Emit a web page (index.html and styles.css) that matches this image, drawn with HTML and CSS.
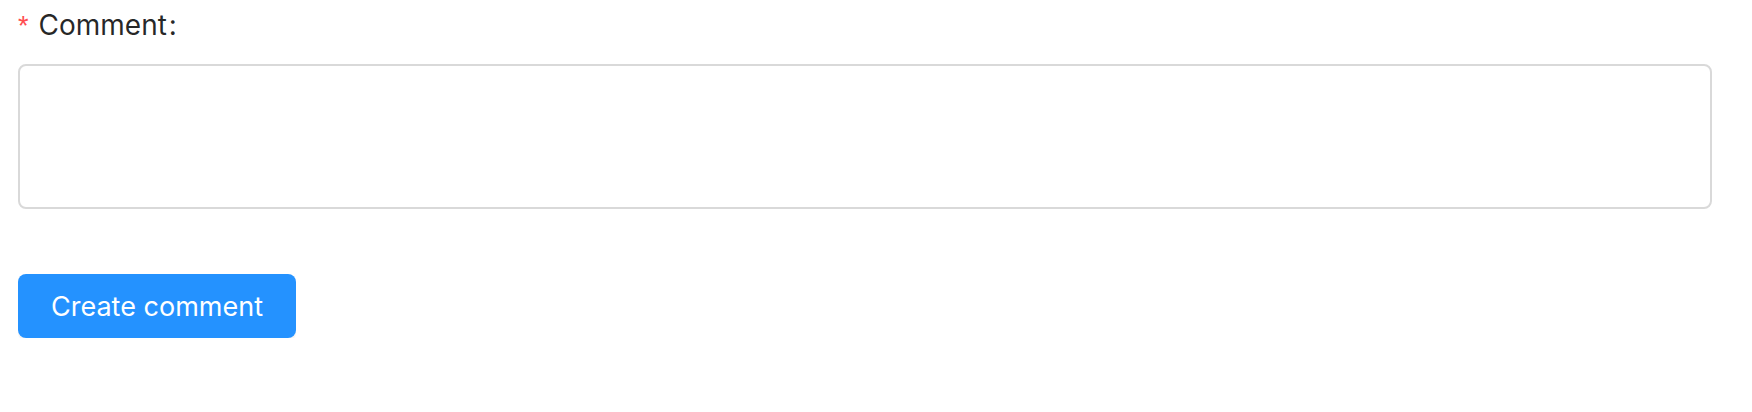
FILE: index.html
```html
<!DOCTYPE html>
<html>
<head>
<meta charset="utf-8">
<link rel="stylesheet" href="styles.css">
</head>
<body>
<form class="form">
  <div class="item">
    <label class="label" for="comment"><span class="req">*</span>Comment<span class="colon">:</span></label>
    <textarea id="comment" class="textarea"></textarea>
  </div>
  <div class="actions">
    <button type="button" class="btn">Create comment</button>
  </div>
</form>
</body>
</html>
```
FILE: styles.css
```css
html, body {
  margin: 0;
  padding: 0;
  background: #fff;
}
body {
  font-family: Inter, "Noto Sans", sans-serif;
  color: rgba(0, 0, 0, 0.85);
}
.form {
  padding: 0 40px 0 18px;
}
.item {
  display: flex;
  flex-direction: column;
}
.label {
  display: flex;
  align-items: baseline;
  height: 50px;
  font-size: 28px;
  line-height: 50px;
  margin-bottom: 14px;
  margin-top: 0;
}
.req {
  color: #ff4d4f;
  font-size: 27px;
  margin-right: 10px;
  font-family: "Liberation Sans", sans-serif;
}
.colon {
  margin-left: 2px;
}
.textarea {
  box-sizing: border-box;
  width: 1694px;
  height: 145px;
  border: 2px solid #d9d9d9;
  border-radius: 8px;
  resize: none;
  margin: 0;
  padding: 8px 18px;
  font-family: inherit;
  font-size: 25px;
}
.actions {
  margin-top: 65px;
}
.btn {
  box-sizing: border-box;
  width: 278px;
  height: 64px;
  border: none;
  border-radius: 8px;
  background: #2492ff;
  color: #fff;
  font-family: Inter, "Noto Sans", sans-serif;
  font-size: 27px;
  box-shadow: 0 3px 0 rgba(0, 0, 0, 0.04);
  padding: 0;
}
```
